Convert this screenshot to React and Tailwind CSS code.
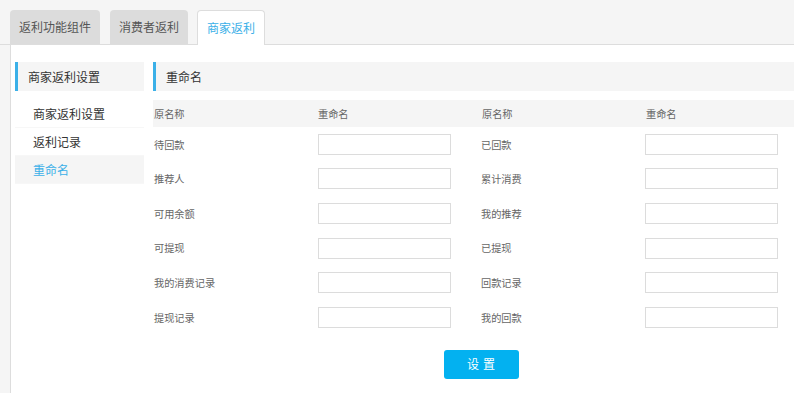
import { useState } from 'react'

// 商家返利 → 重命名 settings page

const TABS = ['返利功能组件', '消费者返利', '商家返利']
const TAB_GAP = ['mr-[10px]', 'mr-[9px]', 'mr-0']
const MENU = ['商家返利设置', '返利记录', '重命名']

const ROWS = [
  ['待回款', '已回款'],
  ['推荐人', '累计消费'],
  ['可用余额', '我的推荐'],
  ['可提现', '已提现'],
  ['我的消费记录', '回款记录'],
  ['提现记录', '我的回款'],
]

const font = { fontFamily: '"Noto Sans CJK SC", "Noto Sans", sans-serif' }

function SectionTitle({ children }) {
  return (
    <div className="h-[29px] bg-[#f5f5f5] border-l-[3px] border-[#3bb0e8] flex items-center text-[12px] text-[#333]">
      {children}
    </div>
  )
}

function NameInput() {
  return <input type="text" className="ml-px w-[133px] h-[21px] border border-[#dcdcdc] bg-white outline-none" />
}

export default function App() {
  const [tab, setTab] = useState(2)
  const [menu, setMenu] = useState(2)

  return (
    <div className="w-[794px] h-[393px] bg-[#f5f5f5] overflow-hidden" style={font}>
      {/* Tabs */}
      <div className="h-[45px] pl-[10px] pt-[10px] flex items-end border-b border-[#dddddd]">
        {TABS.map((t, i) => (
          <button
            key={t}
            onClick={() => setTab(i)}
            className={
              'h-[34px] px-[9px] rounded-t-[4px] text-[12px] ' + TAB_GAP[i] + ' ' +
              (i === tab
                ? 'bg-white border border-b-0 border-[#dddddd] -mb-px h-[35px] text-[#3bb0e8]'
                : 'bg-[#dcdcdc] text-[#555]')
            }
          >
            {t}
          </button>
        ))}
      </div>

      {/* Body */}
      <div className="ml-[10px] h-[348px] bg-white border-l border-[#dddddd] flex pt-[17px] pl-[4px]">
        {/* Left menu */}
        <div className="w-[129px] shrink-0">
          <SectionTitle>
            <span className="pl-[10px]">商家返利设置</span>
          </SectionTitle>
          <div className="mt-[9px]">
            {MENU.map((m, i) => (
              <div
                key={m}
                onClick={() => setMenu(i)}
                className={
                  'h-[28px] flex items-center pl-[18px] text-[12px] border-b border-[#f7f7f7] cursor-pointer ' +
                  (i === menu ? 'bg-[#f5f5f5] text-[#3bb0e8]' : 'text-[#333]')
                }
              >
                {m}
              </div>
            ))}
          </div>
        </div>

        {/* Right panel */}
        <div className="ml-[9px] flex-1 overflow-hidden">
          <SectionTitle>
            <span className="pl-[10px]">重命名</span>
          </SectionTitle>

          <div className="mt-[9px] w-[656px]">
            <div className="h-[27px] bg-[#f5f5f5] grid grid-cols-[164px_164px_164px_164px] items-center text-[10.2px] text-[#666]">
              <span className="pl-px">原名称</span>
              <span className="pl-px">重命名</span>
              <span className="pl-px">原名称</span>
              <span className="pl-px">重命名</span>
            </div>
            {ROWS.map(([a, b]) => (
              <div key={a} className="h-[34.6px] grid grid-cols-[164px_163px_164px_164px] items-center text-[10.2px] text-[#666]">
                <span className="pl-px">{a}</span>
                <NameInput />
                <span className="pl-px">{b}</span>
                <NameInput />
              </div>
            ))}
            <div className="flex justify-center mt-[15px]">
              <button className="w-[75px] h-[29px] rounded-[3px] bg-[#03b1f0] text-white text-[12px] tracking-[4px] pl-[4px]">
                设置
              </button>
            </div>
          </div>
        </div>
      </div>
    </div>
  )
}
